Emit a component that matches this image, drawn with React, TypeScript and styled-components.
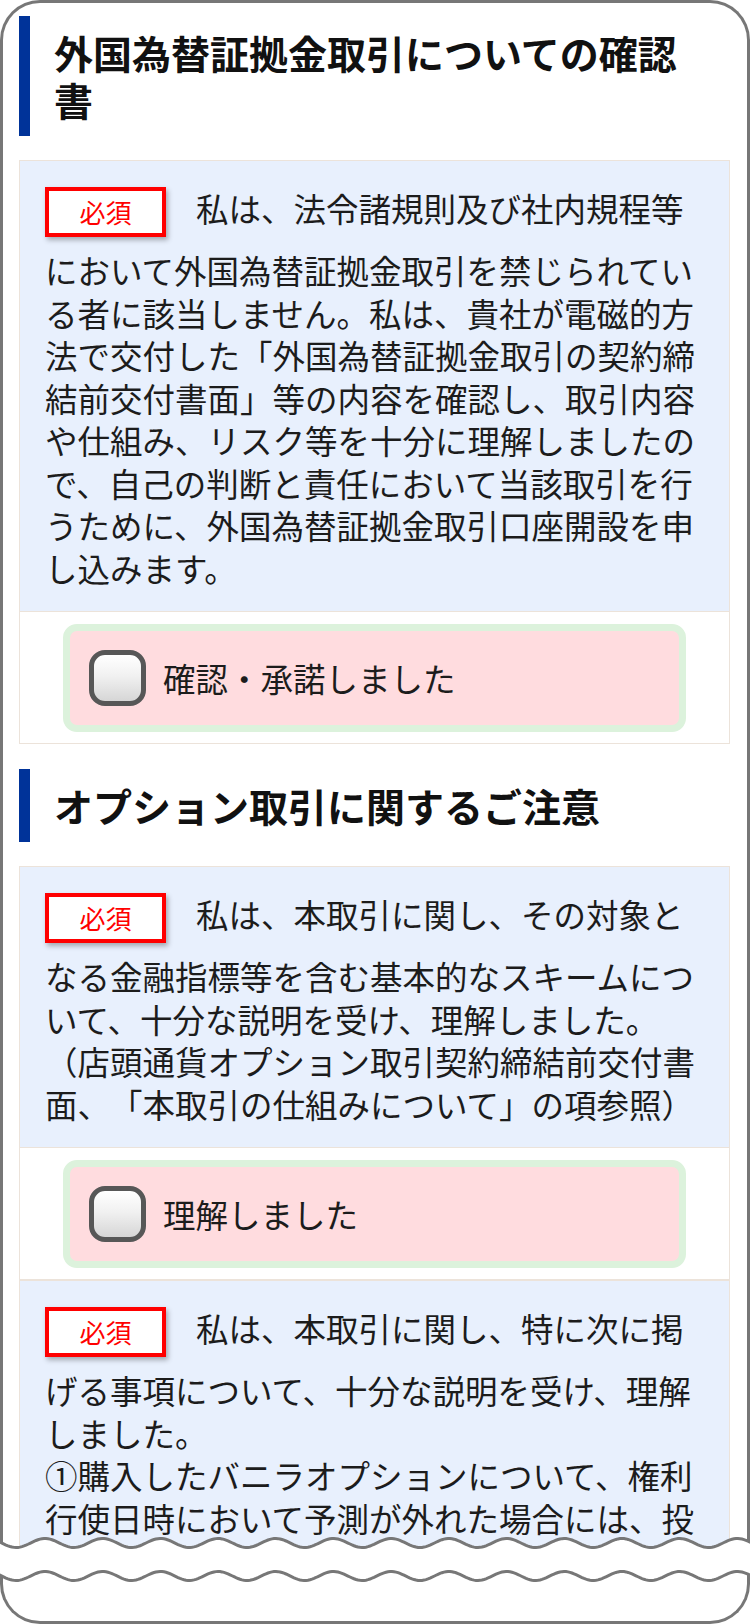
import React from "react";
import styled, { createGlobalStyle } from "styled-components";

const GlobalStyle = createGlobalStyle`
  html, body {
    margin: 0;
    padding: 0;
    background: #fff;
  }
  body {
    font-family: "Noto Sans CJK JP", "Noto Sans", sans-serif;
    color: #1c1c1c;
  }
  * {
    box-sizing: border-box;
  }
`;

const Page = styled.div`
  position: relative;
  width: 750px;
  height: 1624px;
  overflow: hidden;
  background: #fff;
`;

/* 上側の枠（内容はここで切れる） */
const Frame = styled.div`
  height: 1546px;
  border: 3px solid #777;
  border-bottom: 0;
  border-radius: 40px 40px 0 0;
  overflow: hidden;
  padding: 13px 17px 0 16px;
`;

const FrameBottom = styled.div`
  height: 52px;
  margin-top: 26px;
  border: 3px solid #777;
  border-top: 0;
  border-radius: 0 0 40px 40px;
`;

const Tear = styled.svg`
  position: absolute;
  top: 1528px;
  left: 0;
  width: 750px;
  height: 60px;
  pointer-events: none;
`;

const Section = styled.section`
  margin-bottom: 25px;
`;

const Heading = styled.h2`
  margin: 0 0 24px;
  padding: 13px 30px 13px 24px;
  border-left: 11px solid #003399;
  font-size: 39px;
  font-weight: 700;
  line-height: 47px;
  color: #111;
  text-spacing-trim: space-all;
`;

const Item = styled.div`
  border: 1px solid #ece3da;
`;

const Statement = styled.div`
  padding: 26px 27px 22px 25px;
  background: #e8f0fd;
`;

const Text = styled.p`
  margin: 0;
  font-size: 32.5px;
  line-height: 42.5px;
  color: #1c1c1c;
  text-spacing-trim: space-all;
`;

const Badge = styled.span`
  display: inline-flex;
  align-items: center;
  justify-content: center;
  width: 121px;
  height: 50px;
  margin: 0 30px 12px 0;
  vertical-align: top;
  border: 4px solid #ff0000;
  background: #fff;
  color: #ff0000;
  font-size: 26px;
  line-height: 1;
  box-shadow: 2px 3px 5px rgba(0, 0, 0, 0.3);
`;

const CheckRow = styled.div`
  padding: 12px 0 11px;
  border-top: 1px solid #ece3da;
  background: #fff;
`;

const CheckLabel = styled.label`
  display: flex;
  align-items: center;
  gap: 17px;
  width: 623px;
  margin: 0 auto;
  padding: 12px 19px;
  min-height: 108px;
  border: 7px solid #dcf2dc;
  border-radius: 14px;
  background: #ffdcdf;
  font-size: 32.5px;
  line-height: 42.5px;
  color: #1c1c1c;
`;

const Box = styled.span`
  flex: none;
  width: 57px;
  height: 56px;
  border: 5px solid #575757;
  border-radius: 16px;
  background: linear-gradient(#ffffff 0%, #f1f1f1 45%, #d6d6d6 100%);
`;

type Statement = {
  body: React.ReactNode;
  check?: string;
};

type Block = {
  title: string;
  items: Statement[];
};

const blocks: Block[] = [
  {
    title: "外国為替証拠金取引についての確認書",
    items: [
      {
        body:
          "私は、法令諸規則及び社内規程等において外国為替証拠金取引を禁じられている者に該当しません。私は、貴社が電磁的方法で交付した「外国為替証拠金取引の契約締結前交付書面」等の内容を確認し、取引内容や仕組み、リスク等を十分に理解しましたので、自己の判断と責任において当該取引を行うために、外国為替証拠金取引口座開設を申し込みます。",
        check: "確認・承諾しました",
      },
    ],
  },
  {
    title: "オプション取引に関するご注意",
    items: [
      {
        body:
          "私は、本取引に関し、その対象となる金融指標等を含む基本的なスキームについて、十分な説明を受け、理解しました。（店頭通貨オプション取引契約締結前交付書面、「本取引の仕組みについて」の項参照）",
        check: "理解しました",
      },
      {
        body: (
          <>
            私は、本取引に関し、特に次に掲げる事項について、十分な説明を受け、理解しました。
            <br />
            ①購入したバニラオプションについて、権利行使日時において予測が外れた場合には、投資した金額の全額を失うことがあります。
          </>
        ),
        check: "理解しました",
      },
    ],
  },
];

// 破れ目の波線
const wave = (cy: number) => {
  const pts: string[] = [];
  for (let x = -4; x <= 754; x += 2) {
    const y = cy - 4.5 * Math.cos((2 * Math.PI * (x - 45)) / 57.7);
    pts.push(`${x},${y.toFixed(2)}`);
  }
  return pts;
};

const TearEdge: React.FC = () => {
  const top = wave(15);
  const bottom = wave(48);
  const fill = `M${top.join(" L")} L${[...bottom].reverse().join(" L")} Z`;
  return (
    <Tear viewBox="0 0 750 60">
      <path d={fill} fill="#fff" />
      <path d={`M${top.join(" L")}`} fill="none" stroke="#777" strokeWidth={3} />
      <path d={`M${bottom.join(" L")}`} fill="none" stroke="#777" strokeWidth={3} />
    </Tear>
  );
};

const App: React.FC = () => {
  return (
    <Page>
      <GlobalStyle />
      <Frame>
        {blocks.map((block) => (
          <Section key={block.title}>
            <Heading>{block.title}</Heading>
            {block.items.map((item, i) => (
              <Item key={i}>
                <Statement>
                  <Text>
                    <Badge>必須</Badge>
                    {item.body}
                  </Text>
                </Statement>
                {item.check && (
                  <CheckRow>
                    <CheckLabel>
                      <Box />
                      {item.check}
                    </CheckLabel>
                  </CheckRow>
                )}
              </Item>
            ))}
          </Section>
        ))}
      </Frame>
      <FrameBottom />
      <TearEdge />
    </Page>
  );
};

export default App;
